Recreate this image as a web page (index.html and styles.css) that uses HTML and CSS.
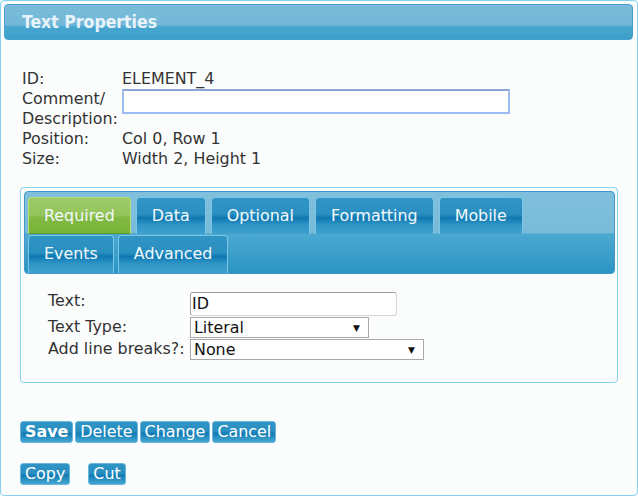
FILE: index.html
```html
<!DOCTYPE html>
<html>
<head>
<meta charset="utf-8">
<link rel="stylesheet" href="styles.css">
</head>
<body>
<div class="frame">
  <div class="header">Text Properties</div>

  <div class="info">
    <div class="lbl">ID:</div><div class="val">ELEMENT_4</div>
    <div class="lbl">Comment/<br>Description:</div><div class="val"><div class="comment"></div></div>
    <div class="lbl">Position:</div><div class="val">Col 0, Row 1</div>
    <div class="lbl">Size:</div><div class="val">Width 2, Height 1</div>
  </div>

  <div class="panel">
    <div class="tabbar">
      <div class="tabrow">
        <div class="tab active">Required</div>
        <div class="tab">Data</div>
        <div class="tab">Optional</div>
        <div class="tab">Formatting</div>
        <div class="tab">Mobile</div>
      </div>
      <div class="tabrow row2">
        <div class="tab">Events</div>
        <div class="tab">Advanced</div>
      </div>
    </div>
    <div class="form">
      <div class="flbl">Text:</div>
      <div class="fctl"><div class="textbox">ID</div></div>
      <div class="flbl">Text Type:</div>
      <div class="fctl"><div class="select sel-type"><span>Literal</span><span class="arrow">▼</span></div></div>
      <div class="flbl">Add line breaks?:</div>
      <div class="fctl"><div class="select sel-breaks"><span>None</span><span class="arrow">▼</span></div></div>
    </div>
  </div>

  <div class="actions">
    <button class="btn bold">Save</button><button class="btn">Delete</button><button class="btn">Change</button><button class="btn">Cancel</button>
  </div>
  <div class="actions second">
    <button class="btn">Copy</button><button class="btn">Cut</button>
  </div>
</div>
</body>
</html>
```

FILE: styles.css
```css
html, body {
  margin: 0;
  padding: 0;
  background: #ffffff;
}
body {
  font-family: "DejaVu Sans", Verdana, sans-serif;
  font-size: 15.9px;
  color: #333333;
}
.frame {
  box-sizing: border-box;
  width: 638px;
  height: 496px;
  border: 1px solid #86d2f0;
  border-radius: 4px;
  background: #fbfdfd;
  padding: 3px 4px 0 3px;
}
.header {
  box-sizing: border-box;
  height: 36px;
  border: 1px solid #4a9fcf;
  border-radius: 4px;
  background: linear-gradient(180deg, #7abcda 0%, #73b8d8 58%, #48a7cf 64%, #3c9fca 100%);
  color: #e8f4fa;
  font-family: "DejaVu Sans Condensed", "DejaVu Sans", sans-serif;
  font-weight: bold;
  font-size: 17.5px;
  line-height: 34px;
  padding-left: 17px;
}
.info {
  display: grid;
  grid-template-columns: 100px auto;
  margin: 29px 0 0 18px;
  line-height: 20px;
}
.comment {
  box-sizing: border-box;
  width: 388px;
  height: 25px;
  border: 2px solid #9cbcf2;
  border-top-color: #8aa6d6;
  background: #ffffff;
  border-radius: 1px;
}
.panel {
  box-sizing: border-box;
  width: 598px;
  margin: 18px 0 0 16px;
  border: 1px solid #86d2f0;
  border-radius: 4px;
  padding: 3px 2px 21px 3px;
  height: 196px;
}
.tabbar {
  box-sizing: border-box;
  height: 83px;
  border: 1px solid #3f98c9;
  border-radius: 4px;
  background: linear-gradient(180deg, #80c0dc 0%, #78bbd9 50%, #4ba9d1 52%, #2c95c4 100%);
  padding: 5px 0 0 3px;
  display: flex;
  flex-direction: column;
  gap: 1px;
}
.tabrow {
  display: flex;
  gap: 5px;
}
.tabrow.row2 {
  gap: 4px;
}
.tab {
  box-sizing: border-box;
  height: 37px;
  padding: 0 15px;
  border: 1px solid #7cc5e5;
  border-bottom: none;
  border-radius: 4px 4px 0 0;
  background: linear-gradient(180deg, #3094c4 0%, #2a8fc1 45%, #0f78b2 55%, #2f95c6 75%, #40a1cd 100%);
  color: #f2f9fc;
  line-height: 35px;
}
.row2 .tab {
  height: 38px;
}
.tab.active {
  border-color: #b7dc78;
  background: linear-gradient(180deg, #9ecc69 0%, #93c45a 50%, #82ba44 55%, #78b438 100%);
  border-bottom: 1px solid #5d9a2a;
}
.form {
  display: grid;
  grid-template-columns: 142px auto;
  grid-template-rows: 26px 22px 22px;
  margin: 17px 0 0 24px;
  line-height: 20px;
}
.fctl {
  display: flex;
  align-items: flex-start;
}
.textbox {
  box-sizing: border-box;
  width: 207px;
  height: 24px;
  margin-top: 1px;
  border: 1px solid #d4d4d4;
  border-top-color: #9a9a9a;
  border-left-color: #a8a8a8;
  border-radius: 3px;
  background: #ffffff;
  color: #111;
  padding-left: 1px;
  line-height: 22px;
}
.select {
  box-sizing: border-box;
  height: 21px;
  border: 1px solid #a9a9a9;
  background: #ffffff;
  color: #111;
  display: flex;
  justify-content: space-between;
  align-items: center;
  padding: 0 8px 0 3px;
}
.sel-type { width: 179px; }
.sel-breaks { width: 234px; }
.arrow {
  font-size: 9px;
  color: #111;
}
.actions {
  margin: 38px 0 0 16px;
  display: flex;
  gap: 2px;
}
.actions.second {
  margin-top: 20px;
  gap: 18px;
}
.btn {
  box-sizing: border-box;
  height: 22px;
  padding: 0 4px;
  border: 1px solid #6ab8de;
  border-radius: 3px;
  background: linear-gradient(180deg, #3094c4 0%, #2a8fc1 45%, #137bb4 58%, #3399c8 85%, #45a3cf 100%);
  color: #ffffff;
  font-family: "DejaVu Sans", Verdana, sans-serif;
  font-size: 15.9px;
  line-height: 20px;
  margin: 0;
}
.btn.bold {
  font-weight: bold;
}
```
